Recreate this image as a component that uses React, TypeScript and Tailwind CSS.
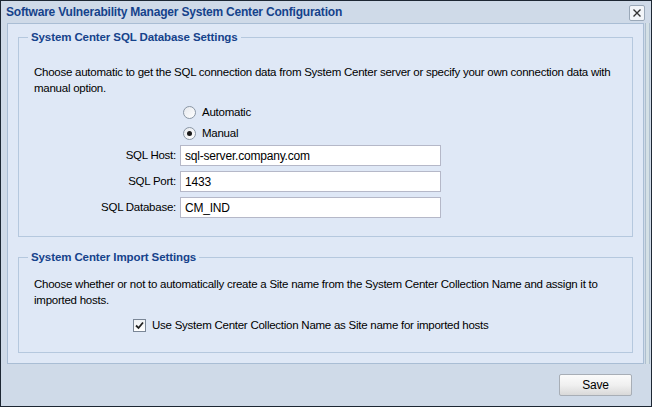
import { useState } from "react";

export default function App() {
  const [mode, setMode] = useState<"auto" | "manual">("manual");
  const [useCollection, setUseCollection] = useState(true);
  const [host, setHost] = useState("sql-server.company.com");
  const [port, setPort] = useState("1433");
  const [db, setDb] = useState("CM_IND");

  return (
    <div className="h-[407px] w-[652px] bg-white">
      <div className="flex h-[407px] w-[652px] flex-col border border-[#1d2733] bg-[#cfdae8] font-['Liberation_Sans',sans-serif] text-[11.5px] tracking-[-0.25px] text-black">
        {/* title bar */}
        <div className="flex h-[22px] items-center justify-between pl-[5px] pr-[6px]">
          <span className="text-[12px] font-bold tracking-[-0.2px] text-[#15428b]">
            Software Vulnerability Manager System Center Configuration
          </span>
          <button className="mt-[2px] flex h-[16px] w-[16px] items-center justify-center rounded-[2px] border border-[#9aa8b8] bg-[#f2f5f9]">
            <svg width="10" height="10" viewBox="0 0 10 10">
              <path d="M1.5 1.5 L8.5 8.5 M8.5 1.5 L1.5 8.5" stroke="#333" strokeWidth="1.4" />
            </svg>
          </button>
        </div>

        {/* body */}
        <div className="flex">
          <div className="ml-[6px] flex h-[341px] flex-1 flex-col border border-[#a9bdd4] bg-[#dfe8f6] px-[10px] pt-[5px]">
            <fieldset className="h-[208px] border border-[#b5c8de] px-[15px]">
              <legend className="ml-[-6px] px-[3px] text-[11.5px] font-bold tracking-[-0.1px] text-[#15428b]">
                System Center SQL Database Settings
              </legend>
              <p className="mt-[18px] leading-[16px]">
                Choose automatic to get the SQL connection data from System Center server or specify your own connection data with manual option.
              </p>
              <div className="mt-[6px] grid grid-cols-[142px_261px] gap-x-[4px]">
                <div />
                <label className="flex h-[21px] items-center gap-[6px] pl-[3px]" onClick={() => setMode("auto")}>
                  <Radio checked={mode === "auto"} />
                  <span>Automatic</span>
                </label>
                <div />
                <label className="flex h-[21px] items-center gap-[6px] pl-[3px]" onClick={() => setMode("manual")}>
                  <Radio checked={mode === "manual"} />
                  <span>Manual</span>
                </label>
                <span className="mt-[1px] flex h-[21px] items-center justify-end">SQL Host:</span>
                <input
                  value={host}
                  onChange={(e) => setHost(e.target.value)}
                  className="mt-[1px] h-[21px] border border-[#b5b8c8] bg-white px-[4px] text-[12px] tracking-[-0.2px] outline-none"
                />
                <span className="mt-[5px] flex h-[21px] items-center justify-end">SQL Port:</span>
                <input
                  value={port}
                  onChange={(e) => setPort(e.target.value)}
                  className="mt-[5px] h-[21px] border border-[#b5b8c8] bg-white px-[4px] text-[12px] tracking-[-0.2px] outline-none"
                />
                <span className="mt-[5px] flex h-[21px] items-center justify-end">SQL Database:</span>
                <input
                  value={db}
                  onChange={(e) => setDb(e.target.value)}
                  className="mt-[5px] h-[21px] border border-[#b5b8c8] bg-white px-[4px] text-[12px] tracking-[-0.2px] outline-none"
                />
              </div>
            </fieldset>

            <fieldset className="mt-[12px] h-[104px] border border-[#b5c8de] px-[15px]">
              <legend className="ml-[-6px] px-[3px] text-[11.5px] font-bold tracking-[-0.1px] text-[#15428b]">
                System Center Import Settings
              </legend>
              <p className="mt-[10px] leading-[16px]">
                Choose whether or not to automatically create a Site name from the System Center Collection Name and assign it to imported hosts.
              </p>
              <label
                className="ml-[99px] mt-[8px] flex h-[18px] items-center gap-[6px]"
                onClick={() => setUseCollection(!useCollection)}
              >
                <span className="flex h-[13px] w-[13px] items-center justify-center border border-[#7a8696] bg-gradient-to-b from-[#eef1f4] to-white">
                  {useCollection && (
                    <svg width="11" height="11" viewBox="0 0 11 11">
                      <path d="M2 5.5 L4.5 8 L9 2.5" fill="none" stroke="#222" strokeWidth="1.8" />
                    </svg>
                  )}
                </span>
                <span>Use System Center Collection Name as Site name for imported hosts</span>
              </label>
            </fieldset>
          </div>
          <div className="ml-[1px] mr-[1px] h-[341px] w-[5px] border-x border-[#aebfcf] bg-[#d4e0e6]" />
        </div>

        {/* footer */}
        <div className="flex flex-1 items-center justify-end pr-[19px]">
          <button className="h-[22px] w-[73px] rounded-[2px] border border-[#a8aeb6] bg-gradient-to-b from-[#fbfbfb] via-[#f0f0f0] to-[#d9d9d9] text-[12px] text-black">
            Save
          </button>
        </div>
      </div>
    </div>
  );
}

function Radio({ checked }: { checked: boolean }) {
  return (
    <span className="flex h-[13px] w-[13px] items-center justify-center rounded-full border border-[#8a96a4] bg-gradient-to-br from-[#e6e9ee] to-white">
      {checked && <span className="h-[5px] w-[5px] rounded-full bg-[#1a1a1a]" />}
    </span>
  );
}
